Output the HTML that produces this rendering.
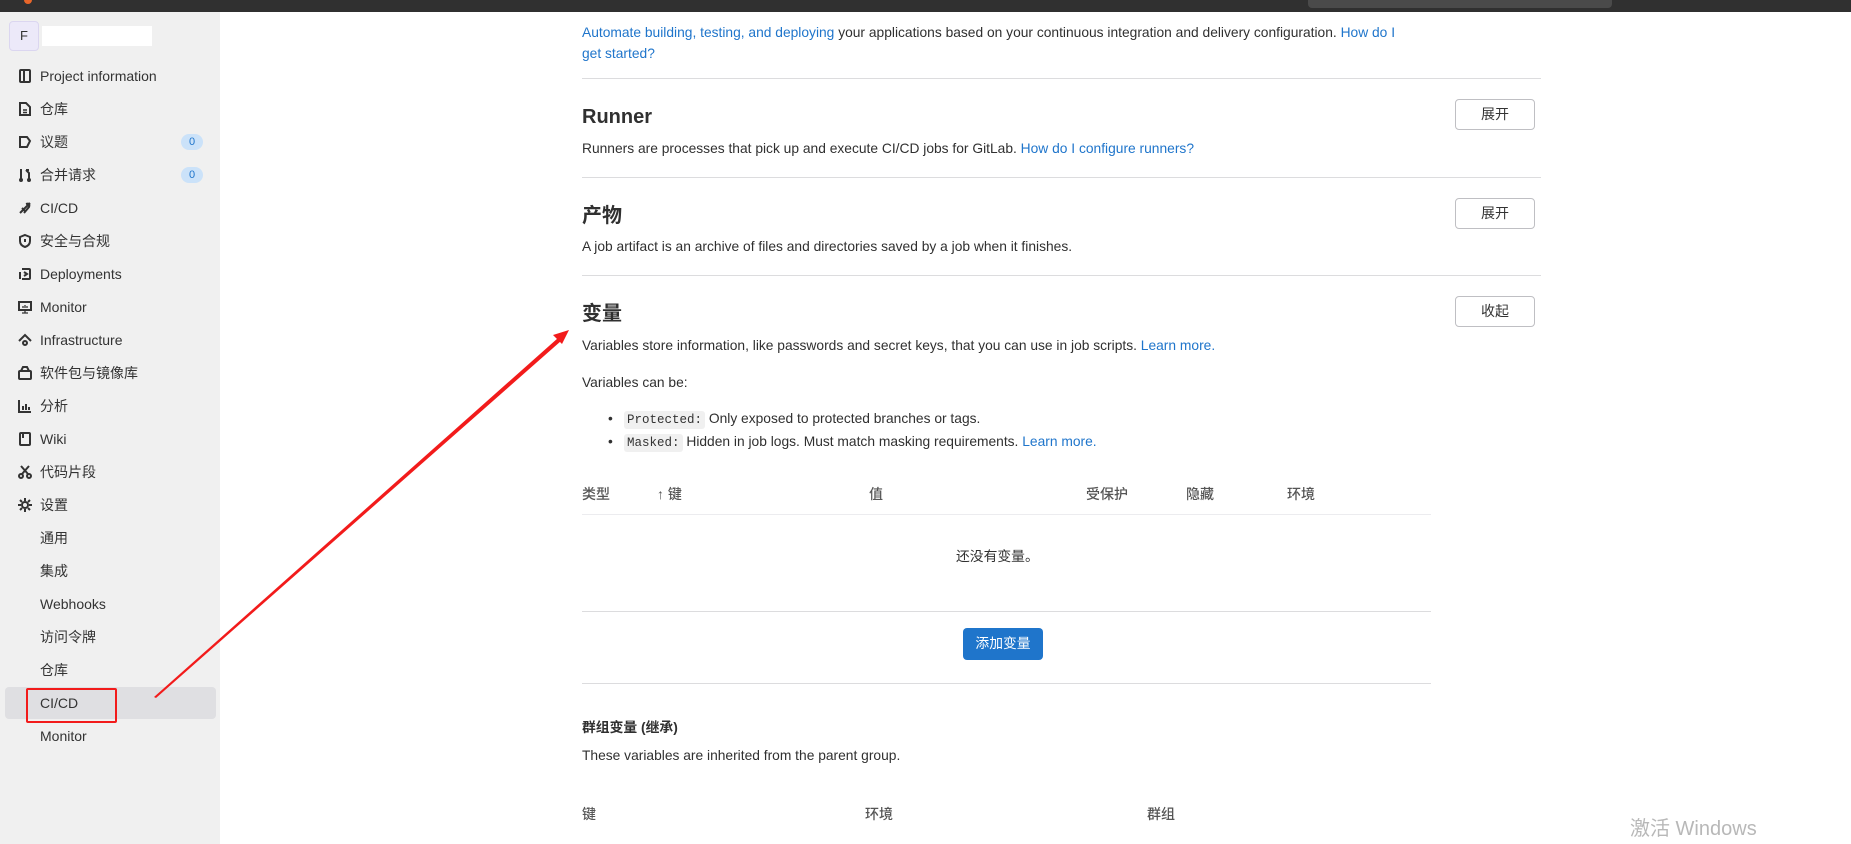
<!DOCTYPE html>
<html><head><meta charset="utf-8">
<style>
*{margin:0;padding:0;box-sizing:border-box}
body{width:1851px;height:844px;overflow:hidden;background:#fff;font-family:"Liberation Sans","Noto Sans CJK SC",sans-serif;font-size:13.8px;color:#303030;position:relative}
.a{position:absolute;white-space:nowrap}
.top{position:absolute;left:0;top:0;width:1851px;height:12px;background:#303030}
.search{position:absolute;left:1308px;top:0;width:304px;height:8px;background:#4a4a4a;border-radius:0 0 4px 4px}
.side{position:absolute;left:0;top:12px;width:220px;height:832px;background:#f0f0f0}
.nav{position:absolute;left:40px;font-size:14px;color:#333;line-height:18px}
.ic{position:absolute;left:17px;width:16px;height:16px}
.badge{position:absolute;left:181px;width:22px;height:16px;border-radius:8px;background:#cbe2f9;color:#1f75cb;font-size:11px;text-align:center;line-height:16px}
.hr{position:absolute;height:1px;background:#dcdcde}
.btn{position:absolute;left:1455px;width:80px;height:31px;border:1px solid #bfbfc3;border-radius:4px;text-align:center;line-height:29px;font-size:14px;color:#333;background:#fff}
h2{position:absolute;left:582px;font-size:20px;font-weight:600;color:#303030;line-height:24px}
.l{color:#1f75cb}
code{font-family:"Liberation Mono",monospace;font-size:12.5px;background:#f0f0f0;padding:2px 3px;border-radius:3px;color:#333}
.th{position:absolute;top:484px;font-size:14px;font-weight:500;color:#555}
</style></head><body>
<div class="top"><div style="position:absolute;left:24px;top:0;width:8px;height:4px;background:#e8662a;border-radius:0 0 4px 4px"></div></div>
<div class="search"></div>
<div class="side">
<div class="a" style="left:9px;top:9px;width:30px;height:30px;background:#ece9f9;border:1px solid #dbd6f0;border-radius:4px;text-align:center;line-height:28px;font-size:13px;color:#333">F</div>
<div class="a" style="left:42px;top:14px;width:110px;height:20px;background:#fff"></div>
</div>
<div class="nav" style="top:67px">Project information</div>
<div class="nav" style="top:100px">仓库</div>
<div class="nav" style="top:133px">议题</div>
<div class="nav" style="top:166px">合并请求</div>
<div class="nav" style="top:199px">CI/CD</div>
<div class="nav" style="top:232px">安全与合规</div>
<div class="nav" style="top:265px">Deployments</div>
<div class="nav" style="top:298px">Monitor</div>
<div class="nav" style="top:331px">Infrastructure</div>
<div class="nav" style="top:364px">软件包与镜像库</div>
<div class="nav" style="top:397px">分析</div>
<div class="nav" style="top:430px">Wiki</div>
<div class="nav" style="top:463px">代码片段</div>
<div class="nav" style="top:496px">设置</div>
<div class="nav" style="top:529px">通用</div>
<div class="nav" style="top:562px">集成</div>
<div class="nav" style="top:595px">Webhooks</div>
<div class="nav" style="top:628px">访问令牌</div>
<div class="nav" style="top:661px">仓库</div>
<div class="a" style="left:5px;top:687px;width:211px;height:32px;background:#dfdfe2;border-radius:4px"></div>
<div class="nav" style="top:694px">CI/CD</div>
<div class="nav" style="top:727px">Monitor</div>
<div class="a" style="left:26px;top:688px;width:91px;height:35px;border:2px solid #f21b1b;border-radius:2px"></div>
<div class="badge" style="top:134px">0</div>
<div class="badge" style="top:167px">0</div>
<svg class="ic" style="top:68px" viewBox="0 0 16 16" fill="none" stroke="#333" stroke-width="2"><rect x="3" y="2" width="10" height="12" rx="1"/><path d="M7 2v12"/></svg>
<svg class="ic" style="top:101px" viewBox="0 0 16 16" fill="none" stroke="#333" stroke-width="2"><path d="M3 2h6l4 4v8H3z"/><path d="M6 9h4M6 11.5h4" stroke-width="1.5"/></svg>
<svg class="ic" style="top:134px" viewBox="0 0 16 16" fill="none" stroke="#333" stroke-width="2"><path d="M3 3h7l3 4-3 6H3z"/></svg>
<svg class="ic" style="top:167px" viewBox="0 0 16 16" fill="none" stroke="#333" stroke-width="2"><path d="M4 2v12M12 14V6l-3-3M9 3l3 0"/><circle cx="4" cy="13" r="1"/><circle cx="12" cy="13" r="1"/></svg>
<svg class="ic" style="top:200px" viewBox="0 0 16 16" fill="none" stroke="#333" stroke-width="2"><path d="M3 13l10-10M5 8l3 3M9 4c3-1 4 0 3 3l-5 6"/></svg>
<svg class="ic" style="top:233px" viewBox="0 0 16 16" fill="none" stroke="#333" stroke-width="2"><path d="M8 2l5 2v4c0 3-2 5-5 6-3-1-5-3-5-6V4z"/><path d="M8 6v3"/></svg>
<svg class="ic" style="top:266px" viewBox="0 0 16 16" fill="none" stroke="#333" stroke-width="2"><path d="M5 3h7a1 1 0 011 1v8a1 1 0 01-1 1H5M3 6v7"/><path d="M7 6l3 2-3 2"/></svg>
<svg class="ic" style="top:299px" viewBox="0 0 16 16" fill="none" stroke="#333" stroke-width="2"><rect x="2" y="3" width="12" height="8"/><path d="M5 14h6M8 11v3M6 7v2M8 6v3M10 7v2" stroke-width="1.3"/></svg>
<svg class="ic" style="top:332px" viewBox="0 0 16 16" fill="none" stroke="#333" stroke-width="2"><path d="M2 9l6-6 6 6"/><circle cx="8" cy="11" r="2"/></svg>
<svg class="ic" style="top:365px" viewBox="0 0 16 16" fill="none" stroke="#333" stroke-width="2"><rect x="2" y="6" width="12" height="8" rx="1"/><path d="M4 6l2-4h4l2 4"/></svg>
<svg class="ic" style="top:398px" viewBox="0 0 16 16" fill="none" stroke="#333" stroke-width="2"><path d="M2 2v12h12M6 8v4M9 6v6M12 9v3"/></svg>
<svg class="ic" style="top:431px" viewBox="0 0 16 16" fill="none" stroke="#333" stroke-width="2"><rect x="3" y="2" width="10" height="12" rx="1"/><path d="M6 2v5"/></svg>
<svg class="ic" style="top:464px" viewBox="0 0 16 16" fill="none" stroke="#333" stroke-width="2"><circle cx="4" cy="12" r="2"/><circle cx="12" cy="12" r="2"/><path d="M5 10l7-8M11 10L4 2"/></svg>
<svg class="ic" style="top:497px" viewBox="0 0 16 16" fill="none" stroke="#333" stroke-width="2"><circle cx="8" cy="8" r="3"/><path d="M8 1v3M8 12v3M1 8h3M12 8h3M3 3l2 2M11 11l2 2M13 3l-2 2M5 11l-2 2"/></svg>

<div class="a" style="left:582px;top:22px;line-height:21px"><span class="l">Automate building, testing, and deploying</span> your applications based on your continuous integration and delivery configuration. <span class="l">How do I<br>get started?</span></div>
<div class="hr" style="left:582px;top:78px;width:959px"></div>
<h2 style="top:105px">Runner</h2>
<div class="btn" style="top:99px">展开</div>
<div class="a" style="left:582px;top:141px">Runners are processes that pick up and execute CI/CD jobs for GitLab. <span class="l">How do I configure runners?</span></div>
<div class="hr" style="left:582px;top:177px;width:959px"></div>
<h2 style="top:204px">产物</h2>
<div class="btn" style="top:198px">展开</div>
<div class="a" style="left:582px;top:239px">A job artifact is an archive of files and directories saved by a job when it finishes.</div>
<div class="hr" style="left:582px;top:275px;width:959px"></div>
<h2 style="top:302px">变量</h2>
<div class="btn" style="top:296px">收起</div>
<div class="a" style="left:582px;top:338px">Variables store information, like passwords and secret keys, that you can use in job scripts. <span class="l">Learn more.</span></div>
<div class="a" style="left:582px;top:375px">Variables can be:</div>
<div class="a" style="left:608px;top:411px">•</div>
<div class="a" style="left:624px;top:411px"><code>Protected:</code> Only exposed to protected branches or tags.</div>
<div class="a" style="left:608px;top:434px">•</div>
<div class="a" style="left:624px;top:434px"><code>Masked:</code> Hidden in job logs. Must match masking requirements. <span class="l">Learn more.</span></div>
<div class="th" style="left:582px">类型</div>
<div class="th" style="left:657px">↑ 键</div>
<div class="th" style="left:869px">值</div>
<div class="th" style="left:1086px">受保护</div>
<div class="th" style="left:1186px">隐藏</div>
<div class="th" style="left:1287px">环境</div>
<div class="hr" style="left:582px;top:514px;width:849px;background:#ececef"></div>
<div class="a" style="left:956px;top:545px">还没有变量。</div>
<div class="hr" style="left:582px;top:611px;width:849px"></div>
<div class="a" style="left:963px;top:628px;width:80px;height:32px;background:#1f75cb;border-radius:4px;color:#fff;text-align:center;line-height:32px">添加变量</div>
<div class="hr" style="left:582px;top:683px;width:849px"></div>
<div class="a" style="left:582px;top:716px;font-weight:700">群组变量 (继承)</div>
<div class="a" style="left:582px;top:748px">These variables are inherited from the parent group.</div>
<div class="th" style="left:582px;top:804px">键</div>
<div class="th" style="left:865px;top:804px">环境</div>
<div class="th" style="left:1147px;top:804px">群组</div>
<div class="a" style="left:1630px;top:812px;font-size:20px;color:#b8b8b8">激活 Windows</div>
<svg class="a" style="left:0;top:0" width="1851" height="844"><polygon points="154,697 558,338 561,341 156,698" fill="#f21b1b"/><polygon points="569,330 553,335 562,344" fill="#f21b1b"/></svg>
</body></html>
